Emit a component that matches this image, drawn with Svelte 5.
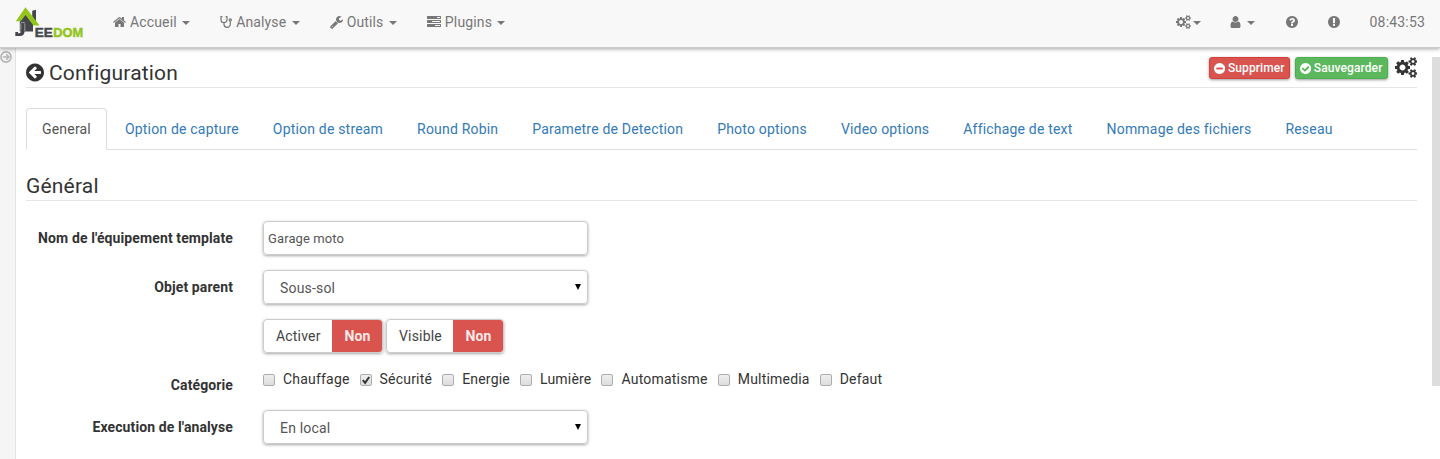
<script>
  const circle = 'M1664 896q0 209-103 385.5t-279.5 279.5-385.5 103-385.5-103-279.5-279.5-103-385.5 103-385.5 279.5-279.5 385.5-103 385.5 103 279.5 279.5 103 385.5z';
  const smallCog = 'v140q0 16-149 31-12 27-30 52 51 113 51 138 0 4-4 7-122 71-124 71-8 0-46-47t-52-68q-20 2-30 2t-30-2q-14 21-52 68t-46 47q-2 0-124-71-4-3-4-7 0-25 51-138-18-25-30-52-149-15-149-31v-140q0-16 149-31 13-29 30-52-51-113-51-138 0-4 4-7 4-2 35-20t59-34 30-16q8 0 46 46.5t52 67.5q20-2 30-2t30 2q51-71 92-112l6-2q4 0 124 70 4 3 4 7 0 25-51 138 17 23 30 52 149 15 149 31z';
  const icons = {
    home: { box: '64 0 1664 1792', w: 13, d: 'M1472 992v480q0 26-19 45t-45 19h-384v-384h-256v384h-384q-26 0-45-19t-19-45v-480q0-1 .5-3t.5-3l575-474 575 474q1 2 1 6zm223-69l-62 74q-8 9-21 11h-3q-13 0-21-7l-692-577-692 577q-12 8-24 7-13-2-21-11l-62-74q-8-10-7-23.5t11-21.5l719-599q32-26 76-26t76 26l244 204v-195q0-14 9-23t23-9h192q14 0 23 9t9 23v408l219 182q10 8 11 21.5t-7 23.5z' },
    wrench: { box: '64 0 1664 1792', w: 13, d: 'M448 1472q0-26-19-45t-45-19-45 19-19 45 19 45 45 19 45-19 19-45zm644-420l-682 682q-37 37-90 37-52 0-91-37l-106-108q-38-36-38-90 0-53 38-91l681-681q39 98 114.5 173.5t173.5 114.5zm634-435q0 39-23 106-47 134-164.5 217.5t-258.5 83.5q-185 0-316.5-131.5t-131.5-316.5 131.5-316.5 316.5-131.5q58 0 121.5 16.5t107.5 46.5q16 11 16 28t-16 28l-293 169v224l193 107q5-3 79-48.5t135.5-81 70.5-35.5q15 0 23.5 10t8.5 25z' },
    tasks: { box: '0 0 1792 1792', w: 14, d: 'M1024 1408h640v-128h-640v128zm-384-512h1024v-128h-1024v128zm640-512h384v-128h-384v128zm512 832v256q0 26-19 45t-45 19h-1664q-26 0-45-19t-19-45v-256q0-26 19-45t45-19h1664q26 0 45 19t19 45zm0-512v256q0 26-19 45t-45 19h-1664q-26 0-45-19t-19-45v-256q0-26 19-45t45-19h1664q26 0 45 19t19 45zm0-512v256q0 26-19 45t-45 19h-1664q-26 0-45-19t-19-45v-256q0-26 19-45t45-19h1664q26 0 45 19t19 45z' },
    user: { box: '256 0 1280 1792', w: 11, d: 'M1536 1399q0 109-62.5 187t-150.5 78h-854q-88 0-150.5-78t-62.5-187q0-85 8.5-160.5t31.5-152 58.5-131 94-89 134.5-34.5q131 128 313 128t313-128q76 0 134.5 34.5t94 89 58.5 131 31.5 152 8.5 160.5zm-256-887q0 159-112.5 271.5t-271.5 112.5-271.5-112.5-112.5-271.5 112.5-271.5 271.5-112.5 271.5 112.5 112.5 271.5z' },
    question: { box: '128 0 1536 1792', w: 12, d: 'M1024 1376v-192q0-14-9-23t-23-9h-192q-14 0-23 9t-9 23v192q0 14 9 23t23 9h192q14 0 23-9t9-23zm256-672q0-88-55.5-163t-138.5-116-170-41q-243 0-371 213-15 24 8 42l132 100q7 6 19 6 16 0 25-12 53-68 86-92 34-24 86-24 48 0 85.5 26t37.5 59q0 38-20 61t-68 45q-63 28-115.5 86.5t-52.5 125.5v36q0 14 9 23t23 9h192q14 0 23-9t9-23q0-19 21.5-49.5t54.5-49.5q32-18 49-28.5t46-35 44.5-48 28-60.5 12.5-81z' + circle },
    exclamation: { box: '128 0 1536 1792', w: 12, d: circle + 'M1024 1375v-190q0-14-9-23.5t-22-9.5h-192q-13 0-23 10t-10 23v190q0 13 10 23t23 10h192q13 0 22-9.5t9-23.5zm-2-344l18-621q0-12-10-18-10-8-24-8h-220q-14 0-24 8-10 6-10 18l17 621q0 10 10 17.5t24 7.5h185q14 0 23.5-7.5t10.5-17.5z' },
    minus: { box: '128 0 1536 1792', w: 12, d: circle + 'M1344 960v-128q0-26-19-45t-45-19h-768q-26 0-45 19t-19 45v128q0 26 19 45t45 19h768q26 0 45-19t19-45z' },
    check: { box: '128 0 1536 1792', w: 12, d: circle + 'M1412 734q0-28-18-46l-91-90q-19-19-45-19t-45 19l-408 407-226-226q-19-19-45-19t-45 19l-91 90q-18 18-18 46 0 27 18 45l362 362q19 19 45 19 27 0 46-19l543-543q18-18 18-45z' },
    back: { box: '128 0 1536 1792', w: 12, d: circle + 'M1408 960v-128q0-26-19-45t-45-19h-502l189-189q19-19 19-45t-19-45l-91-91q-18-18-45-18t-45 18l-362 362-91 91q-18 18-18 45t18 45l91 91 362 362q18 18 45 18t45-18l91-91q18-18 18-45t-18-45l-189-189h502q26 0 45-19t19-45z' },
    cogs: { box: '-64 0 1920 1792', w: 15, d: 'M832 896q0-106-75-181t-181-75-181 75-75 181 75 181 181 75 181-75 75-181zm768 512q0-52-38-90t-90-38-90 38-38 90q0 53 37.5 90.5t90.5 37.5 90.5-37.5 37.5-90.5zm0-1024q0-52-38-90t-90-38-90 38-38 90q0 53 37.5 90.5t90.5 37.5 90.5-37.5 37.5-90.5zm-384 421v185q0 10-7 19.5t-16 10.5l-155 24q-11 35-32 76 34 48 90 115 7 11 7 20 0 12-7 19-23 30-82.5 89.5t-78.5 59.5q-11 0-21-7l-115-90q-37 19-77 31-11 108-23 155-7 24-30 24h-186q-11 0-20-7.5t-10-17.5l-23-153q-34-10-75-31l-118 89q-7 7-20 7-11 0-21-8-144-133-144-160 0-9 7-19 10-14 41-53t47-61q-23-44-35-82l-152-24q-10-1-17-9.5t-7-19.5v-185q0-10 7-19.5t16-10.5l155-24q11-35 32-76-34-48-90-115-7-11-7-20 0-12 7-20 22-30 82-89t79-59q11 0 21 7l115 90q34-18 77-32 11-108 23-154 7-24 30-24h186q11 0 20 7.5t10 17.5l23 153q34 10 75 31l118-89q8-7 20-7 11 0 21 8 144 133 144 160 0 8-7 19-12 16-42 54t-45 60q23 48 34 82l152 23q10 2 17 10.5t7 19.5zM1856 1338' + smallCog + 'M1856 314' + smallCog }
  };
  const menus = [['home', 'Accueil'], ['stetho', 'Analyse'], ['wrench', 'Outils'], ['tasks', 'Plugins']];
  const tabs = ['General', 'Option de capture', 'Option de stream', 'Round Robin', 'Parametre de Detection', 'Photo options', 'Video options', 'Affichage de text', 'Nommage des fichiers', 'Reseau'];
  const categories = ['Chauffage', 'Sécurité', 'Energie', 'Lumière', 'Automatisme', 'Multimedia', 'Defaut'];
</script>

{#snippet icon(name, size = 14)}
  {#if name === 'stetho'}
    <svg width="12" height="14" viewBox="0 0 12 14" fill="none" stroke="currentColor" stroke-width="1.2">
      <path d="M2.4 1.6H1v3.1c0 1.7 1.3 3 3 3s3-1.3 3-3V1.6H5.6M4 7.7v1.6c0 1.7 1.3 3 3 3s3.3-1.3 3.3-3V6.2" />
      <circle cx="10.3" cy="5" r="1.1" />
    </svg>
  {:else}
    <svg width={icons[name].w * size / 14} height={size} viewBox={icons[name].box} preserveAspectRatio="xMidYMid meet"><path fill="currentColor" fill-rule="evenodd" d={icons[name].d} /></svg>
  {/if}
{/snippet}

<header>
  <svg class="logo" width="70" height="32" viewBox="0 0 70 32">
    <path d="M17.2 3.8l3.8-1V15h-3.8z" fill="#45474c" />
    <path d="M4.8 12.5L11 7l7 8v9.5H4.8z" fill="#45474c" />
    <path d="M.8 14.2L10.5.2 24.6 18.6h-6.2L10.5 8 5.8 14.2z" fill="#93c51b" />
    <path d="M6 14.5h3.6V24q0 5-4.6 5H.3v-4H3v1.3q3 0 3-2.3z" fill="#45474c" />
    <path d="M5.8 16.5v7M9.8 16.5V24M6 15.6h3.8" stroke="#d8d8d8" stroke-width=".6" />
    <text x="19.7" y="29.6" textLength="18" lengthAdjust="spacingAndGlyphs" fill="#45474c" stroke="#45474c">EE</text>
    <text x="38.2" y="29.6" textLength="30" lengthAdjust="spacingAndGlyphs" fill="#93c51b" stroke="#93c51b">DOM</text>
  </svg>
  <nav>
    {#each menus as [name, label]}
      <a class="menu">{@render icon(name)}<span>{label}</span><i class="caret"></i></a>
    {/each}
  </nav>
  <div class="tools">
    <a class="cogs">{@render icon('cogs')}<i class="caret"></i></a>
    <a class="user">{@render icon('user')}<i class="caret"></i></a>
    <a class="help">{@render icon('question')}</a>
    <a class="alert">{@render icon('exclamation')}</a>
    <span class="clock">08:43:53</span>
  </div>
</header>

<div class="body">
  <aside>
    <svg width="14" height="14" viewBox="0 0 14 14" fill="none" stroke="#b4b4b4"><circle cx="6" cy="7" r="5.1" stroke-width="1.6" /><path d="M2.8 7h5.4M6.2 4.3L8.9 7 6.2 9.7" stroke-width="1.6" /></svg>
  </aside>
  <main>
    <div class="title">
      {@render icon('back', 21)}
      <h1>Configuration</h1>
      <button class="danger">{@render icon('minus', 13)}<span>Supprimer</span></button>
      <button class="success">{@render icon('check', 13)}<span>Sauvegarder</span></button>
      {@render icon('cogs', 21)}
    </div>
    <ul class="tabs">
      {#each tabs as tab, i}<li class:active={i === 0}>{tab}</li>{/each}
    </ul>
    <h2>Général</h2>
    <form>
      <div class="row"><b>Nom de l'équipement template</b><div class="field name">Garage moto</div></div>
      <div class="row"><b>Objet parent</b><div class="field select">Sous-sol<i></i></div></div>
      <div class="row"><b></b>
        <div class="switch"><span>Activer</span><strong>Non</strong></div>
        <div class="switch second"><span>Visible</span><strong>Non</strong></div>
      </div>
      <div class="row cats"><b>Catégorie</b>
        <div class="checks">
          {#each categories as cat, i}
            <label><span class="box">{#if i === 1}<svg width="10" height="10" viewBox="0 0 10 10"><path d="M1.8 5.2l2.3 2.6L8.2 2" fill="none" stroke="#333" stroke-width="2" /></svg>{/if}</span>{cat}</label>
          {/each}
        </div>
      </div>
      <div class="row"><b>Execution de l'analyse</b><div class="field select">En local<i></i></div></div>
    </form>
  </main>
  <div class="scroll"></div>
</div>

<style>
  :global(body) { background: #fff; overflow: hidden; }
  :global(#app) { height: 459px; display: flex; flex-direction: column; font-family: Roboto, sans-serif; font-size: 14px; line-height: 20px; letter-spacing: 0.18px; color: #333; }
  * { box-sizing: border-box; }
  svg { display: block; flex: none; }
  header { height: 48px; flex: none; display: flex; background: #f8f8f8; border-bottom: 1px solid #ccc; box-shadow: 0 1px 4px rgba(0, 0, 0, 0.35); color: #777; position: relative; z-index: 1; }
  .logo { margin: 7px 28px 0 15px; font: bold 13px "Liberation Sans", sans-serif; letter-spacing: 0; }
  .logo text { stroke-width: 0.5px; }
  nav { display: flex; gap: 30px; height: 44px; align-items: center; letter-spacing: 0.14px; }
  .menu { display: flex; align-items: center; }
  .menu span { margin: 0 5.4px 0 4px; }
  .caret { border: 4px solid transparent; border-top-color: currentColor; border-bottom: 0; width: 8px; height: 4px; margin-top: 1px; }
  .tools { margin-left: auto; display: flex; align-items: center; height: 44px; padding-right: 15px; }
  .tools a { display: flex; align-items: center; }
  .cogs { gap: 2px; margin-right: 29px; }
  .user { gap: 6px; margin-right: 31px; }
  .help, .alert { margin-right: 30px; }
  .body { flex: 1; display: flex; min-height: 0; }
  aside { width: 16px; background: #f5f5f5; border-right: 1px solid #e2e2e2; padding-top: 2px; }
  main { width: 1391px; margin-left: 10px; }
  .title { display: flex; height: 40px; border-bottom: 1px solid #e5e5e5; align-items: center; padding-top: 10px; }
  h1, h2 { font-weight: 400; font-size: 21px; line-height: 24px; margin: 0; letter-spacing: 0.18px; }
  h1 { margin: 0 auto 0 5px; }
  button { height: 22px; border: 1px solid #d43f3a; border-radius: 3px; background: #d9534f; color: #fff; font: 500 12px/18px Roboto, sans-serif; letter-spacing: 0.1px; padding: 0 4px; display: flex; align-items: center; gap: 3px; margin: -9px 5px 0 0; box-shadow: 0 1px 3px rgba(0, 0, 0, 0.4); }
  .success { background: #5cb85c; border-color: #4cae4c; margin-right: 7px; }
  .title > :global(svg:last-child) { margin-top: -10px; }
  .tabs { list-style: none; margin: 20px 0 0; padding: 0; display: flex; gap: 2px; height: 42px; border-bottom: 1px solid #ddd; color: #337ab7; letter-spacing: 0.192px; }
  .tabs li { height: 42px; padding: 10px 15px; border: 1px solid transparent; border-radius: 4px 4px 0 0; white-space: nowrap; }
  .tabs .active { color: #555; background: #fff; border-color: #ddd; border-bottom-color: #fff; }
  h2 { height: 51px; padding-top: 24px; border-bottom: 1px solid #e5e5e5; margin-bottom: 20px; }
  .row { display: flex; height: 34px; margin-bottom: 15px; }
  .row b { width: 207px; margin-right: 30px; text-align: right; padding-top: 7px; font-weight: 700; letter-spacing: 0.11px; }
  .field { width: 325px; border: 1px solid #ccc; border-radius: 4px; box-shadow: 0 1px 3px rgba(0, 0, 0, 0.35); color: #555; display: flex; align-items: center; }
  .name { padding: 2px 0 0 4px; font-size: 13px; letter-spacing: 0.1px; }
  .select { padding: 2px 6px 0 16px; justify-content: space-between; }
  .select i { border: 3px solid transparent; border-top: 6px solid #000; border-bottom: 0; margin-top: -3px; }
  .switch { display: flex; width: 120px; border: 1px solid #ccc; border-radius: 4px; box-shadow: 0 1px 3px rgba(0, 0, 0, 0.35); overflow: hidden; line-height: 32px; }
  .second { width: 118px; margin-left: 3px; }
  .switch span { flex: 1; padding-left: 12px; color: #444; }
  .switch strong { width: 51px; text-align: center; background: #d9534f; color: #fbe9e8; margin: -1px -1px -1px 0; line-height: 34px; }
  .cats { height: 27px; }
  .checks { display: flex; gap: 10px; height: 22px; letter-spacing: 0.2px; }
  .checks label { display: flex; align-items: center; }
  .box { width: 12px; height: 12px; margin: 2px 8px 0 0; border: 1px solid #adadad; border-radius: 2px; background: linear-gradient(#eee, #ddd); }
  .scroll { width: 8px; height: 329px; margin: 9px 0 0 auto; background: #ddd; }
</style>
